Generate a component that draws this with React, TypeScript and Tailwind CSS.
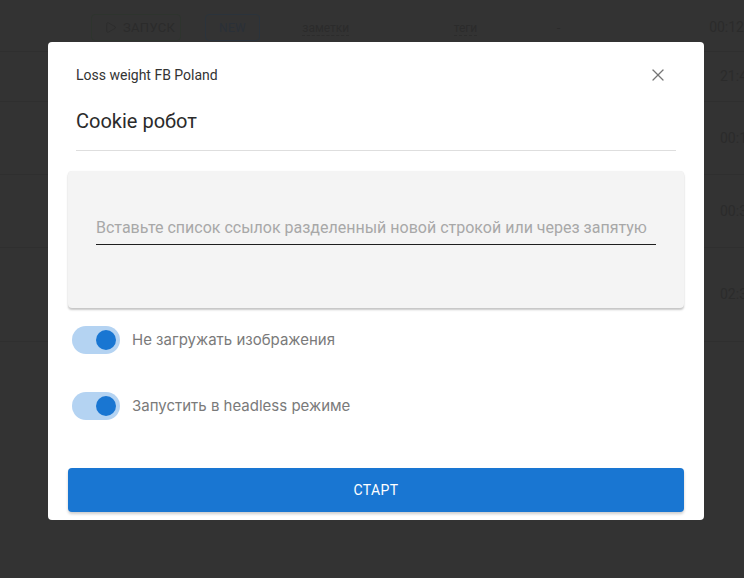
import { X, Play } from "lucide-react";

const ROWS = [
  { h: "h-[50px]", time: "21:45" },
  { h: "h-[73px]", time: "00:14" },
  { h: "h-[73px]", time: "00:32" },
  { h: "h-[94px]", time: "02:31" },
];

function Toggle({ label }: { label: string }) {
  return (
    <div className="flex items-center pl-1">
      <div className="relative h-7 w-12 shrink-0 rounded-full bg-[#b4d3f2]">
        <span className="absolute right-1 top-1 h-5 w-5 rounded-full bg-[#1976d2]" />
      </div>
      <span className="ml-3 font-['Inter','Roboto',sans-serif] text-[15px] text-[#7a7a7a]">
        {label}
      </span>
    </div>
  );
}

export default function App() {
  return (
    <div className="relative h-[578px] w-[744px] overflow-hidden bg-[#333333] font-['Roboto',sans-serif]">
      {/* table behind the overlay */}
      <div className="flex h-[52px] items-center border-b border-[#2f2f2f] pl-[91px] pt-1 text-[13px] text-[#2b2b2b] whitespace-nowrap">
        <div className="w-[116px]">
          <div className="flex h-[27px] w-[90px] items-center gap-1.5 rounded-[4px] border border-[#2e342e] pl-3 uppercase tracking-wide">
            <Play size={13} strokeWidth={1.5} />
            Запуск
          </div>
        </div>
        <div className="w-[99px]">
          <div className="flex h-[27px] w-[55px] items-center justify-center rounded-[4px] border border-[#2b333b] text-[12px] tracking-wide text-[#2a3038]">
            NEW
          </div>
        </div>
        <div className="w-[154px]">
          <span className="border-b border-dashed border-[#2c2c2c] text-[12px]">заметки</span>
        </div>
        <div className="w-[105px]">
          <span className="border-b border-dashed border-[#2c2c2c] text-[12px]">теги</span>
        </div>
        <div className="w-[155px]">-</div>
        <div className="text-[14px]">00:12</div>
      </div>
      {ROWS.map((r) => (
        <div
          key={r.time}
          className={`flex ${r.h} items-center border-b border-[#2f2f2f] pl-[720px] text-[14px] text-[#2b2b2b] whitespace-nowrap`}
        >
          {r.time}
        </div>
      ))}

      {/* modal */}
      <div className="absolute left-[48px] top-[42px] w-[656px] rounded-[4px] bg-white px-5 pt-[23px] pb-2">
        <div className="flex h-5 items-center justify-between pl-2 pr-[18px]">
          <span className="text-[14px] text-[#333]">Loss weight FB Poland</span>
          <X size={20} strokeWidth={1.5} className="-mr-0.5 text-[#757575]" />
        </div>
        <div className="mt-[22px] px-2 text-[20px] leading-7 text-[#2b2b2b]">Cookie робот</div>
        <div className="mx-2 mt-[15px] h-px bg-[#dedede]" />

        <div className="mt-5 rounded-[4px] bg-[#f4f4f4] px-7 pt-[45px] pb-[63px] shadow-[0_2px_2px_rgba(0,0,0,0.22),0_0_1px_rgba(0,0,0,0.08)]">
          <div className="border-b border-[#1f1f1f] pb-1 text-[16px] leading-6 text-[#a8a8a8]">
            Вставьте список ссылок разделенный новой строкой или через запятую
          </div>
        </div>

        <div className="mt-[18px] flex flex-col gap-[38px]">
          <Toggle label="Не загружать изображения" />
          <Toggle label="Запустить в headless режиме" />
        </div>

        <button className="mt-12 flex h-11 w-full items-center justify-center rounded-[4px] bg-[#1976d2] text-[14px] tracking-[0.03em] text-white shadow-[0_2px_3px_rgba(0,0,0,0.2)]">
          СТАРТ
        </button>
      </div>
    </div>
  );
}
